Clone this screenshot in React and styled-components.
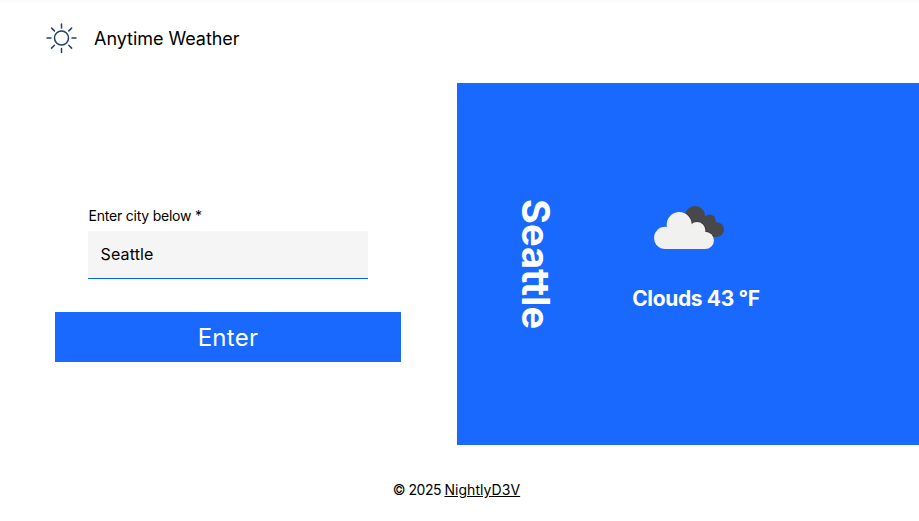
import React, { useState } from "react";
import styled, { createGlobalStyle } from "styled-components";

const GlobalStyle = createGlobalStyle`
  * { box-sizing: border-box; }
  body {
    margin: 0;
    background: #fff;
    color: #000;
    font-family: Inter, "Liberation Sans", sans-serif;
  }
`;

const Page = styled.div`
  display: flex;
  flex-direction: column;
  height: 521px;
  overflow: hidden;
  background: linear-gradient(#fafafa, #fff 4px);
`;

const Header = styled.header`
  display: flex;
  align-items: center;
  gap: 17px;
  height: 83px;
  padding: 0 0 7px 46px;
`;

const SunIcon = styled.svg`
  width: 31px;
  height: 31px;
  fill: none;
  stroke: #20406d;
  stroke-width: 1.5;
  stroke-linecap: round;
`;

const Title = styled.h1`
  margin: 0;
  padding-top: 1px;
  font-size: 18px;
  line-height: 24px;
  font-weight: 400;
  letter-spacing: -0.04px;
`;

const Main = styled.main`
  display: grid;
  grid-template-columns: 457px 1fr;
  height: 362px;
`;

const CityForm = styled.form`
  display: flex;
  flex-direction: column;
  padding: 124px 56px 0 55px;
`;

const Field = styled.div`
  display: flex;
  flex-direction: column;
  width: 280px;
  margin-left: 33px;
`;

const Label = styled.label`
  height: 24px;
  padding-left: 0.5px;
  font-size: 14px;
  line-height: 18px;
  letter-spacing: -0.22px;
`;

const Input = styled.input`
  height: 48px;
  padding: 0 12.5px 2px;
  border: 0;
  border-bottom: 1px solid #0961ed;
  border-radius: 0;
  outline: 0;
  background: #f5f5f5;
  color: #000;
  font: 400 16px Inter, "Liberation Sans", sans-serif;
  letter-spacing: 0.15px;
`;

const Button = styled.button`
  width: 346px;
  height: 50px;
  margin-top: 33px;
  padding: 0;
  border: 0;
  background: #1969ff;
  color: #fff;
  font: 400 24px Inter, "Liberation Sans", sans-serif;
  letter-spacing: 0.3px;
`;

const WeatherPanel = styled.section`
  display: flex;
  align-items: flex-start;
  background: #1969ff;
  color: #fff;
`;

const City = styled.h2`
  width: 48px;
  margin: 116px 0 0 55px;
  writing-mode: vertical-rl;
  font-size: 38px;
  line-height: 48px;
  font-weight: 700;
  letter-spacing: 0.1px;
  white-space: nowrap;
`;

const Conditions = styled.div`
  display: flex;
  flex-direction: column;
  align-items: center;
  width: 160px;
  margin: 121px 0 0 56px;
`;

const CloudIcon = styled.svg`
  width: 74px;
  height: 48px;
  margin-left: -14px;
`;

const Reading = styled.p`
  margin: 33px 0 0;
  font-size: 21px;
  line-height: 28px;
  font-weight: 700;
  letter-spacing: -0.35px;
  white-space: nowrap;
`;

const Footer = styled.footer`
  padding: 36px 6px 0 0;
  text-align: center;
  font-size: 14px;
  line-height: 18px;
  letter-spacing: -0.5px;
`;

const Link = styled.a`
  color: inherit;
  letter-spacing: 0.05px;
  text-decoration: underline;
`;

export default function App() {
  const [city, setCity] = useState("Seattle");
  return (
    <Page>
      <GlobalStyle />
      <Header>
        <SunIcon viewBox="0 0 31 31" aria-hidden="true">
          <circle cx="15.5" cy="15" r="7" />
          <path d="M15.5 1v4M15.5 25.5v4M1 15h4M26 15h4M5.6 5.1l2.8 2.8M22.8 22.3l2.8 2.8M5.6 25.1l2.8-2.8M22.8 7.9l2.8-2.8" />
        </SunIcon>
        <Title>Anytime Weather</Title>
      </Header>
      <Main>
        <CityForm onSubmit={(e) => e.preventDefault()}>
          <Field>
            <Label htmlFor="city">Enter city below *</Label>
            <Input id="city" value={city} onChange={(e) => setCity(e.target.value)} />
          </Field>
          <Button type="submit">Enter</Button>
        </CityForm>
        <WeatherPanel>
          <City>Seattle</City>
          <Conditions>
            <CloudIcon viewBox="0 0 74 48" aria-hidden="true">
              <clipPath id="rearCloud">
                <circle cx="43" cy="12.2" r="10.2" />
                <circle cx="57.5" cy="16.8" r="6.3" />
                <circle cx="64.6" cy="25.6" r="7.4" />
                <path d="M43 12l15 2 6 19H46z" />
              </clipPath>
              <g clipPath="url(#rearCloud)">
                <path fill="#48484a" d="M30 0h44v48H30z" />
                <g fill="#333336">
                  <circle cx="27.2" cy="20.6" r="13.2" />
                  <circle cx="45" cy="26.4" r="9.1" />
                  <circle cx="53.2" cy="36.4" r="9.5" />
                </g>
              </g>
              <g fill="#f1f1ef">
                <circle cx="13.2" cy="33.9" r="11.1" />
                <circle cx="27.2" cy="20.6" r="12.5" />
                <circle cx="45" cy="26.4" r="8.4" />
                <circle cx="53.2" cy="36.4" r="8.7" />
                <path d="M13 23.5l14-4 18 6 8 10v9.5H13z" />
              </g>
            </CloudIcon>
            <Reading>Clouds 43 °F</Reading>
          </Conditions>
        </WeatherPanel>
      </Main>
      <Footer>
        © 2025 <Link>NightlyD3V</Link>
      </Footer>
    </Page>
  );
}
